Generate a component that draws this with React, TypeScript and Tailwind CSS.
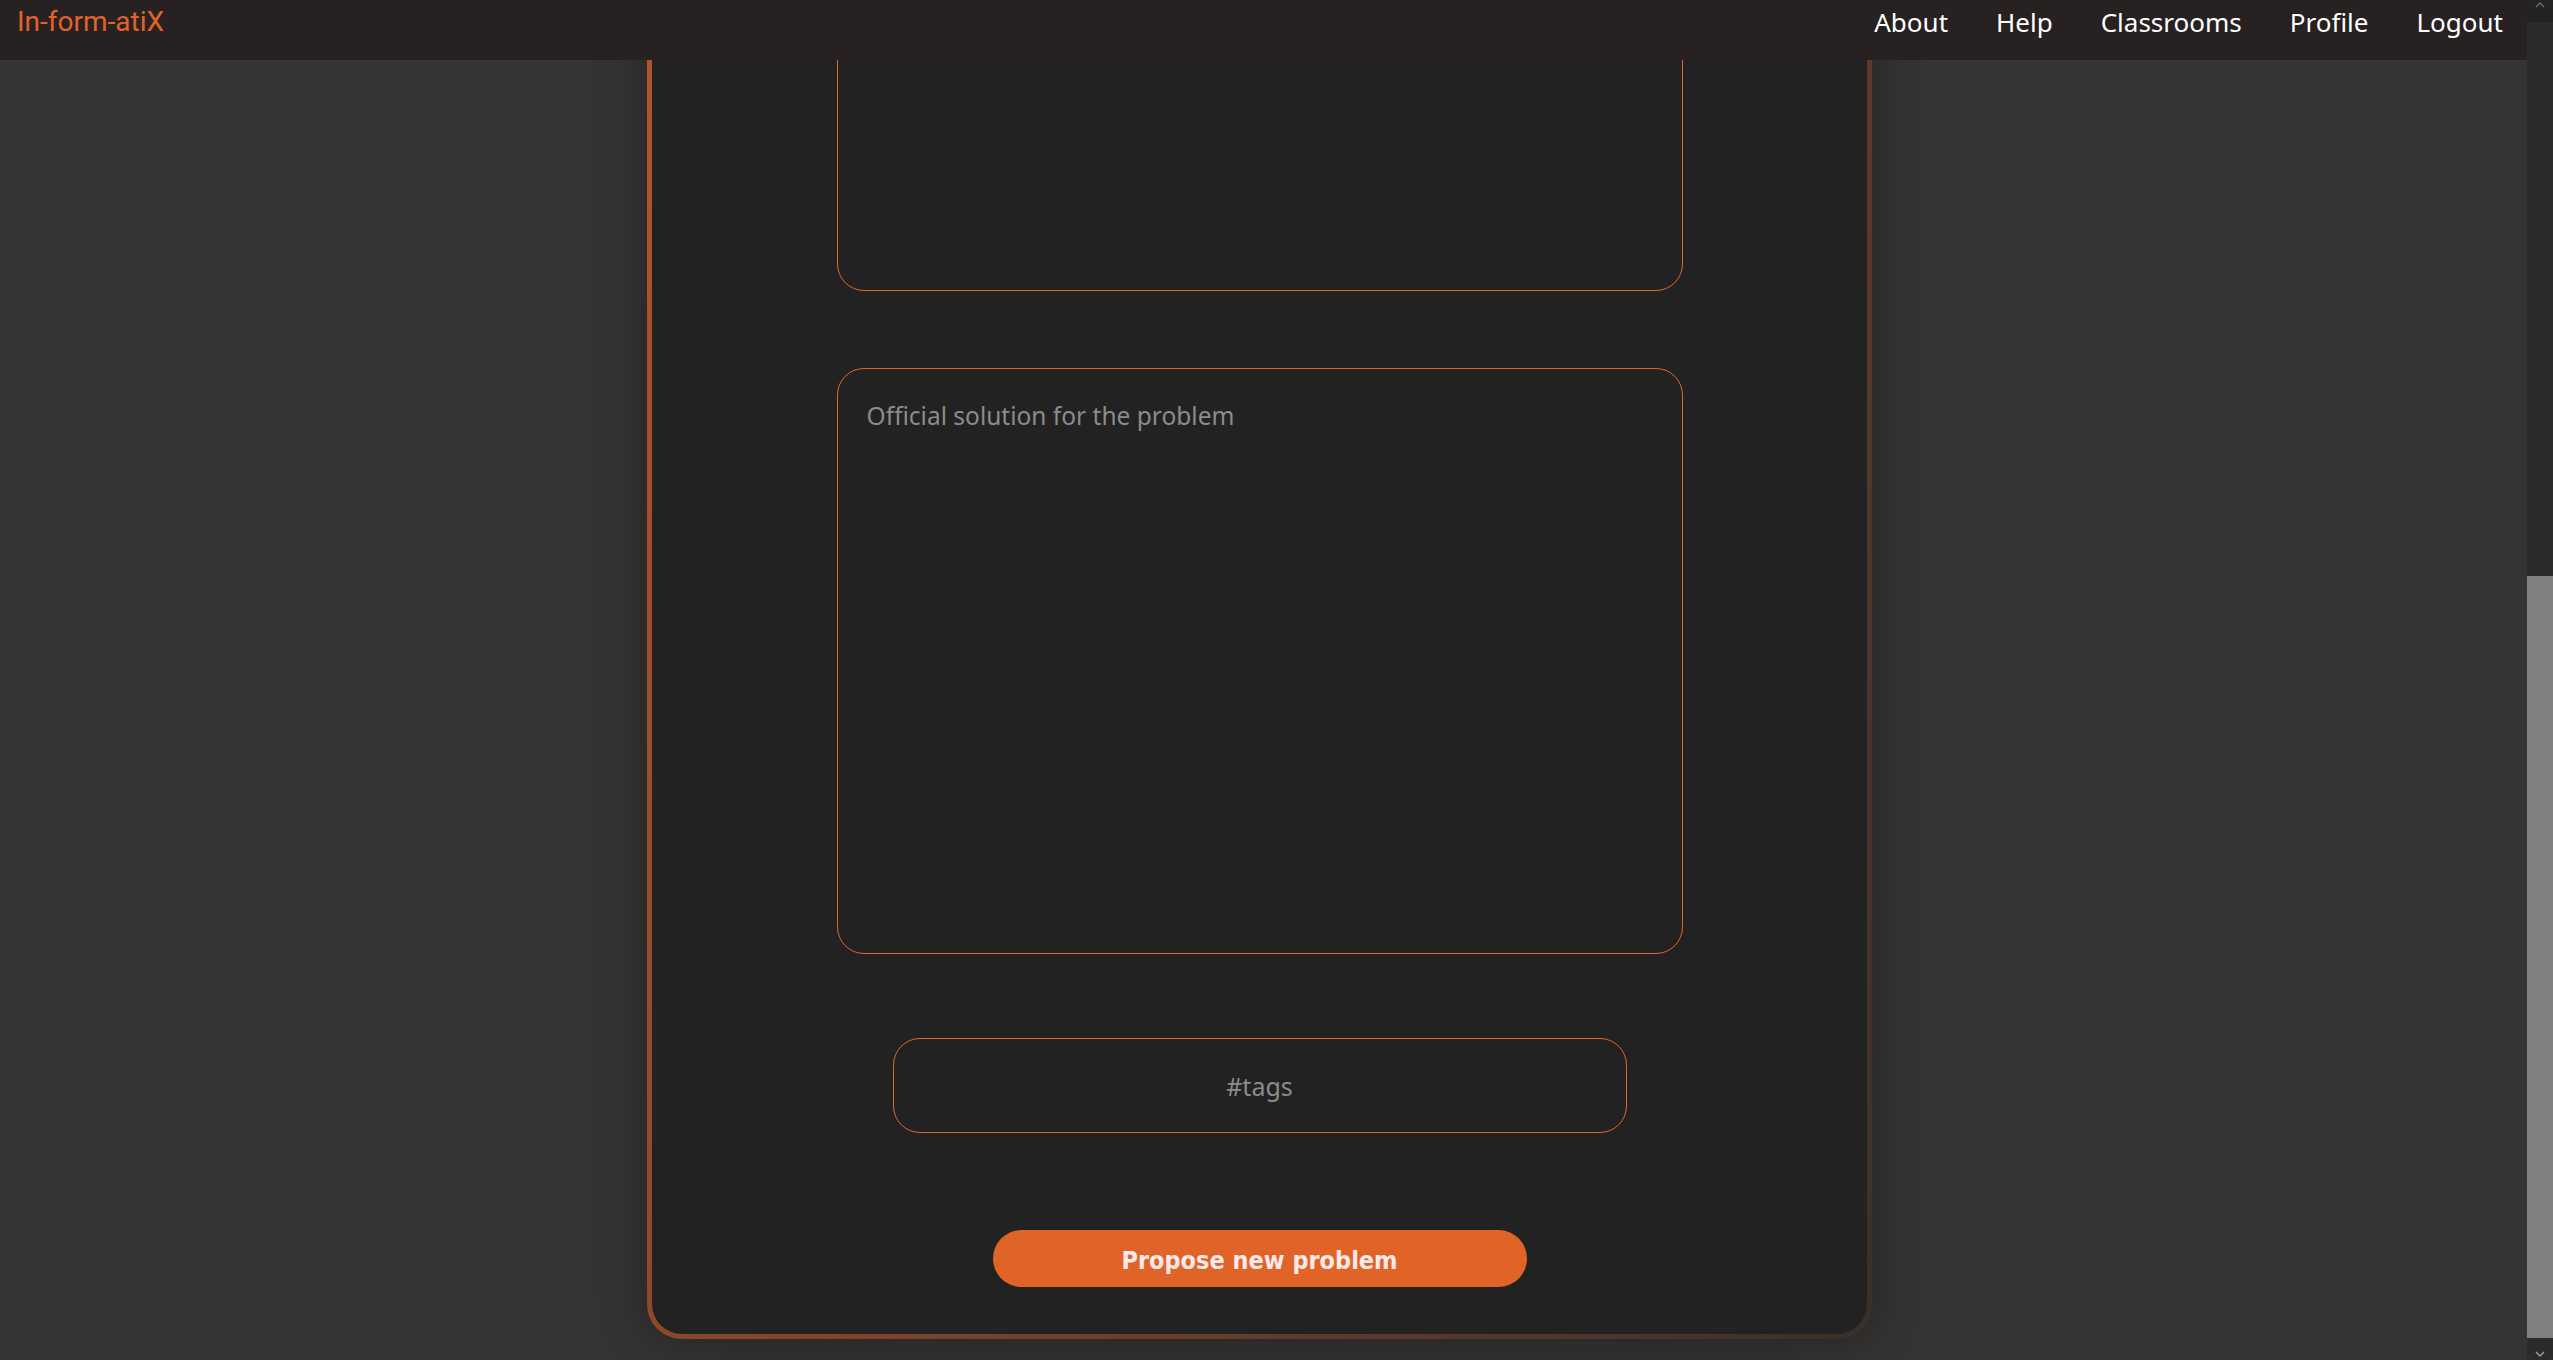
import { useState } from "react";

const navLinks = ["About", "Help", "Classrooms", "Profile", "Logout"];

function Header() {
  return (
    <header className="flex h-[60px] shrink-0 items-start justify-between bg-[#272121] pt-[4px] pl-[17px] pr-[24px]">
      <a
        href="#"
        className="font-['Roboto',sans-serif] text-[28px] leading-[36px] text-[#e2622a]"
      >
        In-form-atiX
      </a>
      <nav className="flex items-start gap-[48px]">
        {navLinks.map((link) => (
          <a
            key={link}
            href="#"
            className="font-['Noto_Sans',sans-serif] text-[26px] leading-[36px] text-white"
          >
            {link}
          </a>
        ))}
      </nav>
    </header>
  );
}

function Scrollbar() {
  return (
    <div className="flex h-full w-[26px] shrink-0 flex-col bg-[#2c2a2d]">
      <div className="flex h-[22px] items-start justify-center bg-[#232325] pt-[1px]">
        <svg width="10" height="8" viewBox="0 0 10 8" fill="none">
          <path d="M1 6 L5 2 L9 6" stroke="#6b6b6b" strokeWidth="1.5" />
        </svg>
      </div>
      <div className="h-[554px]" />
      <div className="h-[762px] bg-[#808080]" />
      <div className="flex flex-1 items-end justify-center pb-[2px]">
        <svg width="10" height="8" viewBox="0 0 10 8" fill="none">
          <path d="M1 2 L5 6 L9 2" stroke="#9a9a9a" strokeWidth="1.5" />
        </svg>
      </div>
    </div>
  );
}

function ProblemForm() {
  const [statement, setStatement] = useState("");
  const [solution, setSolution] = useState("");
  const [tags, setTags] = useState("");

  return (
    <div className="rounded-[35px] bg-[linear-gradient(112deg,#b7562a_0%,#3a2f2b_100%)] p-[5px] shadow-[0_0_50px_rgba(0,0,0,0.35)]">
      <form
        onSubmit={(e) => e.preventDefault()}
        className="flex w-[1215px] flex-col items-center rounded-[30px] bg-[#222222] pb-[47px]"
      >
        {/* Problem statement (scrolled out of view above) */}
        <textarea
          value={statement}
          onChange={(e) => setStatement(e.target.value)}
          className="mt-[120px] block h-[420px] w-[846px] resize-none rounded-[27px] border border-[#e4652a] bg-transparent pl-[29px] pr-7 pt-[30px] font-['Noto_Sans',sans-serif] text-[24.5px] text-white outline-none placeholder:text-[#8b8b8b]"
        />

        <textarea
          value={solution}
          onChange={(e) => setSolution(e.target.value)}
          placeholder="Official solution for the problem"
          className="mt-[77px] block h-[586px] w-[846px] resize-none rounded-[27px] border border-[#e4652a] bg-transparent pl-[29px] pr-7 pt-[29px] font-['Noto_Sans',sans-serif] text-[24.5px] text-white outline-none placeholder:text-[#8b8b8b]"
        />

        <input
          value={tags}
          onChange={(e) => setTags(e.target.value)}
          placeholder="#tags"
          className="mt-[84px] block h-[95px] w-[734px] rounded-[27px] border border-[#e4652a] bg-transparent px-7 text-center font-['Noto_Sans',sans-serif] text-[25px] text-white outline-none placeholder:text-[#8b8b8b]"
        />

        <button
          type="submit"
          className="mt-[97px] h-[57px] w-[534px] rounded-full bg-[#e06428] pt-[4px] font-['DejaVu_Sans_Condensed','DejaVu_Sans',sans-serif] text-[25px] font-bold text-[#fbe9e9]"
        >
          Propose new problem
        </button>
      </form>
    </div>
  );
}

export default function App() {
  return (
    <div className="flex h-screen w-full overflow-hidden bg-[#353432]">
      <div className="flex min-w-0 flex-1 flex-col">
        <Header />
        <main className="flex flex-1 flex-col justify-end overflow-hidden pb-[21px]">
          <div className="flex justify-center pr-[8px]">
            <ProblemForm />
          </div>
        </main>
      </div>
      <Scrollbar />
    </div>
  );
}
